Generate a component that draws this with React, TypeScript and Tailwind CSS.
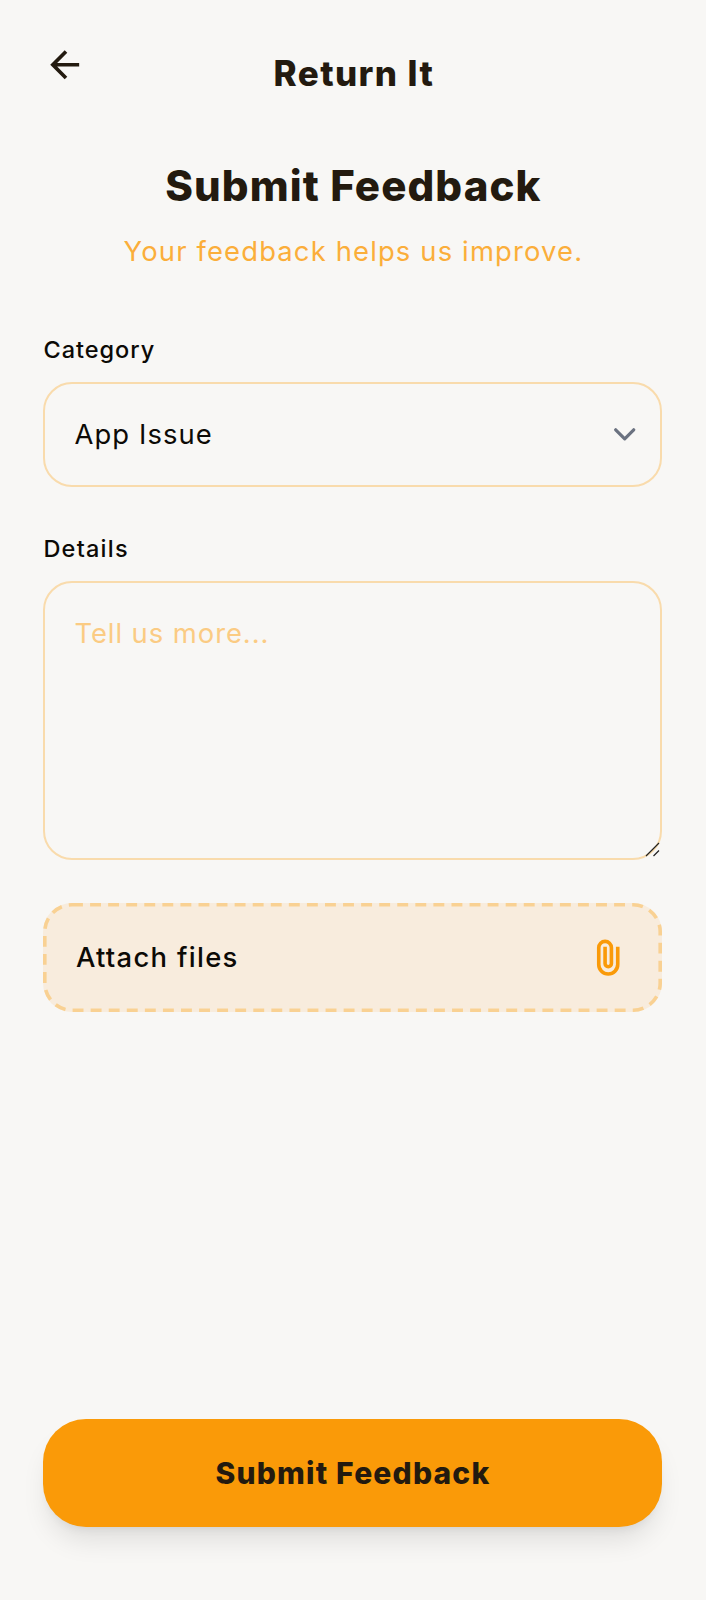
import { useState } from 'react';

function BackIcon() {
  return (
    <svg className="size-[43.4px]" viewBox="0 -960 960 960" fill="currentColor" aria-hidden="true">
      <path d="m313-440 224 224-57 56-320-320 320-320 57 56-224 224h487v80H313Z" />
    </svg>
  );
}

function ChevronIcon() {
  return (
    <svg className="mb-px h-[14px] w-[24px]" viewBox="0 0 24 14" fill="none" stroke="#6b7280" strokeWidth="3.2" strokeLinecap="round" strokeLinejoin="round" aria-hidden="true">
      <path d="M2.7 2.8l9 9 9-9" />
    </svg>
  );
}

function PaperclipIcon() {
  return (
    <svg className="size-[43.4px]" viewBox="0 -960 960 960" fill="#fa9a08" aria-hidden="true">
      <path d="M720-330q0 104-73 177T470-80q-104 0-177-73t-73-177v-370q0-75 52.5-127.5T400-880q75 0 127.5 52.5T580-700v350q0 46-32 78t-78 32q-46 0-78-32t-32-78v-370h80v370q0 13 8.5 21.5T470-320q13 0 21.5-8.5T500-350v-350q-1-42-29.5-71T400-800q-42 0-71 29t-29 71v370q-1 71 49 120.5T470-160q70 0 119-49.5T640-330v-390h80v390Z" />
    </svg>
  );
}

export default function App() {
  const [details, setDetails] = useState('');

  return (
    <div className="flex h-[1600px] w-[706px] flex-col bg-[#f8f7f5] pr-[43.6px] pb-[73px] pl-[43.4px] font-['Inter',sans-serif] text-[#0c0a06]">
      <header className="flex h-[159px] items-start pt-[43px] text-[#231a0f]">
        <button type="button" aria-label="Back" className="w-[44px] shrink-0">
          <BackIcon />
        </button>
        <h2 className="flex-1 pr-[42px] text-center text-[35px] leading-[60px] font-extrabold tracking-[1.4px]">Return It</h2>
      </header>

      <main className="flex flex-1 flex-col">
        <h1 className="pl-[1px] text-center text-[42px] leading-[54px] font-extrabold tracking-[1.1px] text-[#231a0f]">Submit Feedback</h1>
        <p className="mt-4 pl-[1px] text-center text-[27.4px] leading-[45px] font-normal tracking-[1.15px] text-[#fbae3a]">
          Your feedback helps us improve.
        </p>

        <label className="mt-[58px] text-[23.5px] leading-[36px] font-medium tracking-[1px]">Category</label>
        <button type="button" className="mt-[14px] flex h-[105px] items-center justify-between rounded-[29px] border-2 border-[#f9dbac] pr-[23px] pl-[29px] text-left">
          <span className="pt-px text-[27.4px] font-normal tracking-[1.1px]">App Issue</span>
          <ChevronIcon />
        </button>

        <label htmlFor="details" className="mt-[44px] text-[23.5px] leading-[36px] font-medium tracking-[1.25px]">Details</label>
        <div className="relative mt-[14px] h-[279px]">
          <textarea
            id="details"
            value={details}
            onChange={(e) => setDetails(e.target.value)}
            placeholder="Tell us more..."
            className="block h-full w-full resize-none rounded-[29px] border-2 border-[#f9dbac] bg-transparent px-[29px] py-[28px] text-[27.4px] leading-[45px] font-normal tracking-[0.95px] outline-none placeholder:text-[#fbcb83]"
          />
          <svg className="absolute right-[2px] bottom-[3px] size-[15px]" viewBox="0 0 15 15" fill="none" stroke="#222" strokeWidth="1.2" aria-hidden="true">
            <path d="M1 14L14 1M8.5 14L14 8.5" />
          </svg>
        </div>

        <button type="button" className="relative mt-[43px] flex h-[109px] items-center justify-between rounded-[29px] bg-[#f8ecdd] pr-[32px] pl-[32.5px] text-left">
          <svg className="absolute inset-0 h-full w-full" viewBox="0 0 619 109" fill="none" aria-hidden="true">
            <rect x="1.8" y="1.8" width="615.4" height="105.4" rx="27.2" stroke="#f9d193" strokeWidth="3.6" strokeDasharray="10.9 7.17" />
          </svg>
          <span className="pt-px text-[27.4px] font-medium tracking-[1.3px]">Attach files</span>
          <PaperclipIcon />
        </button>

        <button type="button" className="mt-auto h-[108px] rounded-[43px] bg-[#fa9a08] text-[30px] font-extrabold tracking-[1.2px] text-[#231a0f] shadow-[0_18px_27px_-5px_rgba(0,0,0,0.1),0_7px_11px_-7px_rgba(0,0,0,0.1)]">
          Submit Feedback
        </button>
      </main>
    </div>
  );
}
